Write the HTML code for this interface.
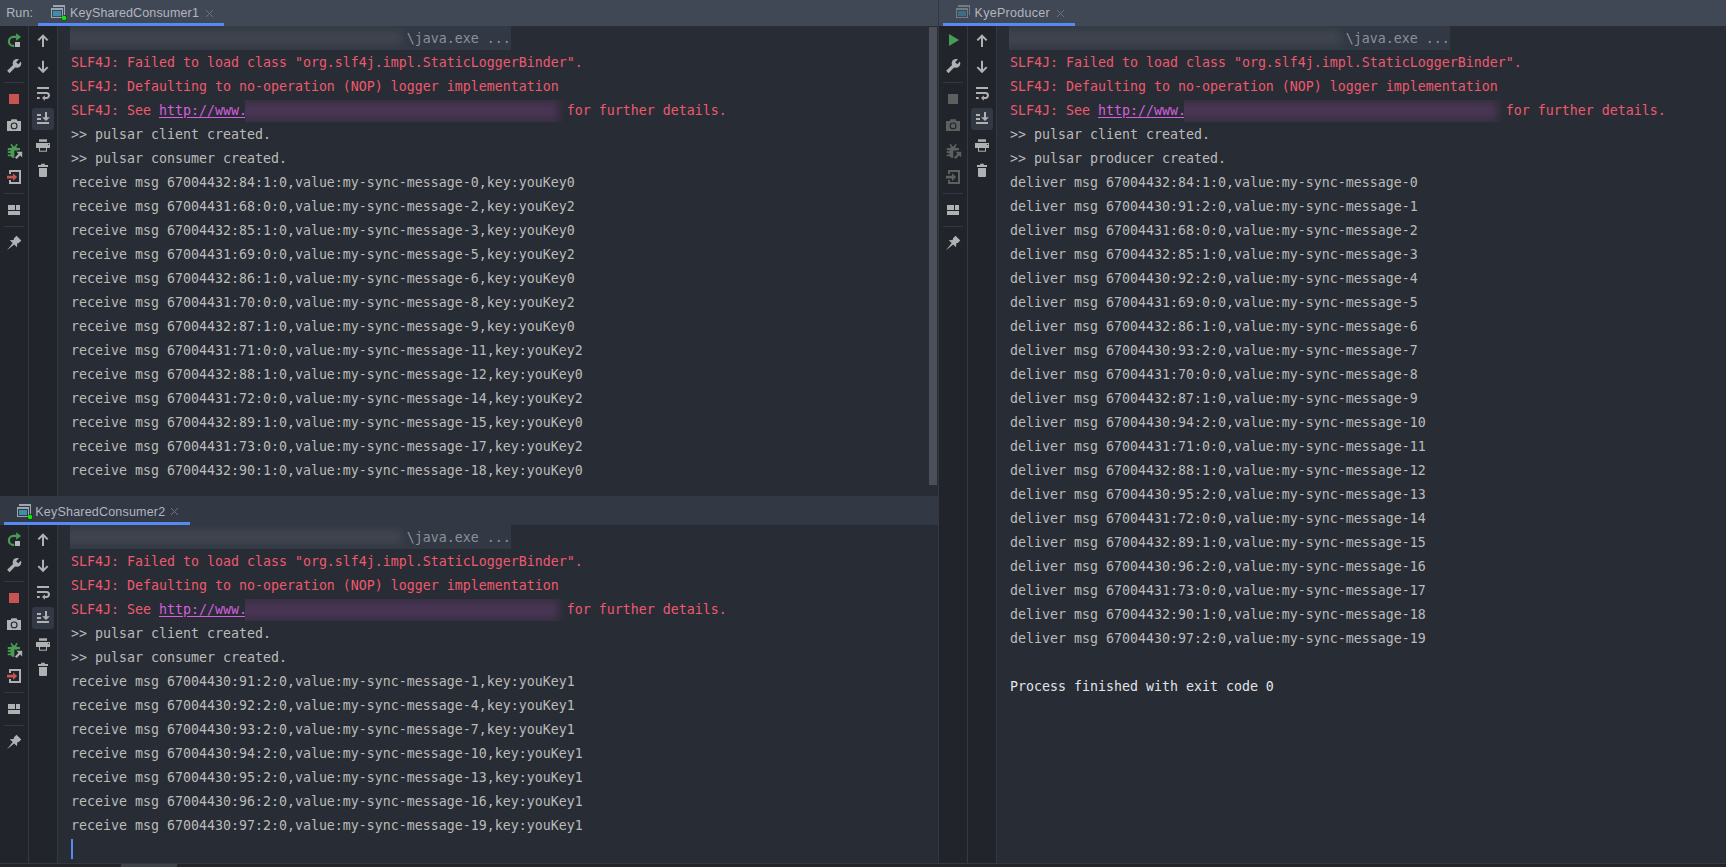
<!DOCTYPE html>
<html lang="en"><head><meta charset="utf-8"><title>Run</title>
<style>
html,body{margin:0;padding:0;background:#282c34;}
body{width:1726px;height:867px;overflow:hidden;position:relative;font-family:"Liberation Sans",sans-serif;}
.abs{position:absolute;}
.hdr{position:absolute;background:#414855;}
.hdr2{position:absolute;background:#323844;}
.side{position:absolute;background:#21252b;}
.vb{position:absolute;width:1px;background:#333841;}
.hb{position:absolute;height:1px;background:#333841;}
.blue{position:absolute;height:3px;background:#568af2;}
.tabt{position:absolute;font-size:12.5px;line-height:16px;color:#b2b6c0;white-space:pre;}
.x{position:absolute;width:9px;height:9px;}
.con{position:absolute;font-family:"DejaVu Sans Mono","Liberation Mono",monospace;font-size:13.29px;line-height:24px;color:#bbbbbb;}
.ln{height:24px;position:relative;white-space:pre;}
.err{color:#ef596f;}
.sys{color:#e2e4e8;}
.lnk{color:#d55fde;text-decoration:underline;text-underline-offset:2px;}
.fold{color:#8b919b;}
.hl{position:absolute;left:-1px;top:-1px;width:441px;height:24px;overflow:hidden;background:#333944;}
.rel{position:relative;}
.blur{position:absolute;display:block;filter:blur(4px);}
.b1{left:-10px;top:5px;width:342px;height:14px;background:#40454f;}
.bx{position:absolute;left:174px;top:1px;width:321px;height:22px;overflow:hidden;background:linear-gradient(90deg,#382f42 0,#382f42 308px,rgba(56,47,66,0) 321px);}
.b2{left:-10px;top:5px;width:322px;height:12px;background:#4c3758;}
.caret{position:absolute;left:0px;top:1px;width:2px;height:20px;background:#568af2;}
.ib{position:absolute;width:16px;height:16px;}
.ic{width:16px;height:16px;display:block;overflow:visible;}
.sep{position:absolute;width:20px;height:1px;background:#333841;}
.sel{position:absolute;width:22px;height:22px;border-radius:3px;background:#323844;}
.thumb{position:absolute;background:#4b4f59;}
</style></head>
<body>
<div class="hdr" style="left:0;top:0;width:938px;height:26px"></div>
<div class="hdr" style="left:939px;top:0;width:787px;height:26px"></div>
<div class="vb" style="left:938px;top:0;height:867px"></div>
<div class="tabt" style="left:6.2px;top:5px;letter-spacing:0.15px">Run:</div>
<div class="ib" style="left:50px;top:4px"><svg class="ic" viewBox="0 0 16 16"><path d="M3 1 H15 V11 H14 V3 H3 Z" fill="#9aa7b0"/><path d="M1 4 H13 V14 H1 Z M2 6 V13 H12 V6 Z" fill="#9aa7b0" fill-rule="evenodd"/><rect x="3" y="7" width="8" height="5" fill="#3f8cab"/><circle cx="14.1" cy="14" r="2.9" fill="rgba(20,22,30,0.35)"/><circle cx="14.1" cy="14" r="2.2" fill="#00f000"/></svg></div>
<div class="tabt" style="left:70px;top:5px;letter-spacing:0.14px">KeySharedConsumer1</div>
<svg class="x" style="left:204.5px;top:8.5px" viewBox="0 0 9 9"><path d="M1 1 L8 8 M8 1 L1 8" stroke="#6b717d" stroke-width="1" fill="none"/></svg>
<div class="blue" style="left:38px;top:23px;width:186px"></div>
<div class="ib" style="left:955px;top:4px;opacity:0.55"><svg class="ic" viewBox="0 0 16 16"><path d="M3 1 H15 V11 H14 V3 H3 Z" fill="#9aa7b0"/><path d="M1 4 H13 V14 H1 Z M2 6 V13 H12 V6 Z" fill="#9aa7b0" fill-rule="evenodd"/><rect x="3" y="7" width="8" height="5" fill="#3f8cab"/></svg></div>
<div class="tabt" style="left:974.6px;top:5px;letter-spacing:0.27px">KyeProducer</div>
<svg class="x" style="left:1055.5px;top:8.7px" viewBox="0 0 9 9"><path d="M1 1 L8 8 M8 1 L1 8" stroke="#6b717d" stroke-width="1" fill="none"/></svg>
<div class="blue" style="left:943px;top:23px;width:132px"></div>
<div class="side" style="left:0;top:26px;width:57px;height:837px"></div>
<div class="vb" style="left:28px;top:26px;height:837px"></div>
<div class="vb" style="left:57px;top:26px;height:837px"></div>
<div class="side" style="left:939px;top:26px;width:57px;height:837px"></div>
<div class="vb" style="left:967px;top:26px;height:837px"></div>
<div class="vb" style="left:996px;top:26px;height:837px"></div>
<div class="hdr2" style="left:0;top:496px;width:938px;height:29px"></div>
<div class="ib" style="left:16px;top:503px"><svg class="ic" viewBox="0 0 16 16"><path d="M3 1 H15 V11 H14 V3 H3 Z" fill="#9aa7b0"/><path d="M1 4 H13 V14 H1 Z M2 6 V13 H12 V6 Z" fill="#9aa7b0" fill-rule="evenodd"/><rect x="3" y="7" width="8" height="5" fill="#3f8cab"/><circle cx="14.1" cy="14" r="2.9" fill="rgba(20,22,30,0.35)"/><circle cx="14.1" cy="14" r="2.2" fill="#00f000"/></svg></div>
<div class="tabt" style="left:35.3px;top:504px;letter-spacing:0.2px">KeySharedConsumer2</div>
<svg class="x" style="left:170.4px;top:507.4px" viewBox="0 0 9 9"><path d="M1 1 L8 8 M8 1 L1 8" stroke="#6b717d" stroke-width="1" fill="none"/></svg>
<div class="blue" style="left:4px;top:522px;width:186px"></div>
<div class="side" style="left:0;top:864px;width:1726px;height:3px"></div>
<div class="hb" style="left:0;top:863px;width:1726px"></div>
<div class="thumb" style="left:121px;top:864px;width:56px;height:3px;background:#3e424c"></div>
<div class="thumb" style="left:929px;top:27px;width:8px;height:458px"></div>
<div class="ib" style="left:6px;top:33px"><svg class="ic" viewBox="0 0 16 16"><path d="M10.3 3.9 H7.4 A4.5 4.5 0 0 0 7.4 12.9 H8.2" fill="none" stroke="#499c54" stroke-width="2.2"/><path d="M10.1 0.2 L15.1 3.9 L10.1 7.7 Z" fill="#499c54"/><rect x="9" y="9" width="5" height="5" fill="#b4b6b8"/></svg></div>
<div class="ib" style="left:6px;top:59px"><svg class="ic" viewBox="0 0 16 16"><path d="M2.3 13 L10 5.3" stroke="#afb1b3" stroke-width="3.2" fill="none"/><circle cx="11" cy="4.4" r="4.3" fill="#afb1b3"/><path d="M11.2 4.2 L16.5 -1.1" stroke="#21252b" stroke-width="3" fill="none"/></svg></div>
<div class="sep" style="left:4px;top:82px"></div>
<div class="ib" style="left:6px;top:91px"><svg class="ic" viewBox="0 0 16 16"><rect x="3" y="3" width="10" height="10" fill="#c75450"/></svg></div>
<div class="ib" style="left:6px;top:118px"><svg class="ic" viewBox="0 0 16 16"><path d="M1 3 H4.6 L5.6 1.2 H10.6 L11.6 3 H15 V13 H1 Z" fill="#afb1b3"/><circle cx="8.1" cy="7.9" r="2.9" fill="none" stroke="#21252b" stroke-width="1.1"/></svg></div>
<div class="ib" style="left:6px;top:144px"><svg class="ic" viewBox="0 0 16 16"><defs><clipPath id="bc499c54"><path d="M0 -1 H16 V6.4 H8.3 V16 H0 Z"/></clipPath></defs><g clip-path="url(#bc499c54)"><rect x="4.6" y="2.4" width="7" height="11.5" rx="3.5" fill="#499c54"/><path d="M7.2 3.2 L5 0.2 M9 3.2 L11.2 0.2" stroke="#499c54" stroke-width="1.5" fill="none"/><path d="M1.8 5.1 H14" stroke="#499c54" stroke-width="2.4" fill="none"/><path d="M1.8 8.2 H6 M1.8 11.4 H6" stroke="#499c54" stroke-width="1.7" fill="none"/></g><path d="M10.4 7.8 H16.2 V13.6 Z" fill="#afb1b3"/><path d="M14.6 9.4 L9.8 14.2" stroke="#afb1b3" stroke-width="2.3" fill="none"/></svg></div>
<div class="ib" style="left:6px;top:170px"><svg class="ic" viewBox="0 0 16 16"><path d="M3 4 V0 H15 V14 H3 V10 H5 V12 H13 V2 H5 V4 Z" fill="#afb1b3"/><path d="M1 5.8 H7 V3.2 L11.1 7.1 L7 11 V8.4 H1 Z" fill="#c75450"/></svg></div>
<div class="sep" style="left:4px;top:193px"></div>
<div class="ib" style="left:6px;top:202px"><svg class="ic" viewBox="0 0 16 16"><rect x="2" y="3" width="7" height="5" fill="#afb1b3"/><rect x="10" y="3" width="4" height="5" fill="#afb1b3"/><rect x="2" y="9" width="12" height="4" fill="#afb1b3"/></svg></div>
<div class="sep" style="left:4px;top:226px"></div>
<div class="ib" style="left:6px;top:235px"><svg class="ic" viewBox="0 0 16 16"><path d="M10.5 0.8 L15.3 5.6 L12.8 8.1 L11.3 8.3 L11 12.3 L8.2 9.5 L1 15.2 L6.7 8 L3.7 5.3 L7.7 5 L8 3.3 Z" fill="#afb1b3"/></svg></div>
<div class="ib" style="left:35px;top:33px"><svg class="ic" viewBox="0 0 16 16"><path d="M8 13.9 V3 M3.3 7.4 L8 2.7 L12.7 7.4" fill="none" stroke="#afb1b3" stroke-width="2"/></svg></div>
<div class="ib" style="left:35px;top:59px"><svg class="ic" viewBox="0 0 16 16"><path d="M8 1.8 V12.6 M3.3 8.1 L8 12.8 L12.7 8.1" fill="none" stroke="#afb1b3" stroke-width="2"/></svg></div>
<div class="ib" style="left:35px;top:85px"><svg class="ic" viewBox="0 0 16 16"><path d="M2 3 H14 M2 8 H11.5 A2.5 2.5 0 0 1 11.5 13 H9.5 M2 13 H4.7" fill="none" stroke="#afb1b3" stroke-width="2"/><path d="M9.9 10.2 L7 13 L9.9 15.8 Z" fill="#afb1b3"/></svg></div>
<div class="sel" style="left:32px;top:108px"></div>
<div class="ib" style="left:35px;top:111px"><svg class="ic" viewBox="0 0 16 16"><path d="M2 4 H6 M2 8 H6 M2 12 H14 M11 1 V7" fill="none" stroke="#afb1b3" stroke-width="2"/><path d="M7.1 6.2 H14.9 L11 9.9 Z" fill="#afb1b3"/></svg></div>
<div class="ib" style="left:35px;top:137px"><svg class="ic" viewBox="0 0 16 16"><rect x="4" y="2.3" width="8" height="2.5" fill="#afb1b3"/><rect x="1" y="6" width="14" height="5" fill="#afb1b3"/><rect x="4.5" y="10.5" width="7" height="3.7" fill="#21252b" stroke="#afb1b3" stroke-width="1"/><circle cx="13.5" cy="7.5" r="0.6" fill="#21252b"/></svg></div>
<div class="ib" style="left:35px;top:163px"><svg class="ic" viewBox="0 0 16 16"><path d="M6.2 0.8 H9.8 V2 H13 V4 H3 V2 H6.2 Z" fill="#afb1b3"/><path d="M4 5 H12 V13 A1 1 0 0 1 11 14 H5 A1 1 0 0 1 4 13 Z" fill="#afb1b3"/></svg></div>
<div class="ib" style="left:6px;top:532px"><svg class="ic" viewBox="0 0 16 16"><path d="M10.3 3.9 H7.4 A4.5 4.5 0 0 0 7.4 12.9 H8.2" fill="none" stroke="#499c54" stroke-width="2.2"/><path d="M10.1 0.2 L15.1 3.9 L10.1 7.7 Z" fill="#499c54"/><rect x="9" y="9" width="5" height="5" fill="#b4b6b8"/></svg></div>
<div class="ib" style="left:6px;top:558px"><svg class="ic" viewBox="0 0 16 16"><path d="M2.3 13 L10 5.3" stroke="#afb1b3" stroke-width="3.2" fill="none"/><circle cx="11" cy="4.4" r="4.3" fill="#afb1b3"/><path d="M11.2 4.2 L16.5 -1.1" stroke="#21252b" stroke-width="3" fill="none"/></svg></div>
<div class="sep" style="left:4px;top:581px"></div>
<div class="ib" style="left:6px;top:590px"><svg class="ic" viewBox="0 0 16 16"><rect x="3" y="3" width="10" height="10" fill="#c75450"/></svg></div>
<div class="ib" style="left:6px;top:617px"><svg class="ic" viewBox="0 0 16 16"><path d="M1 3 H4.6 L5.6 1.2 H10.6 L11.6 3 H15 V13 H1 Z" fill="#afb1b3"/><circle cx="8.1" cy="7.9" r="2.9" fill="none" stroke="#21252b" stroke-width="1.1"/></svg></div>
<div class="ib" style="left:6px;top:643px"><svg class="ic" viewBox="0 0 16 16"><defs><clipPath id="bc499c54"><path d="M0 -1 H16 V6.4 H8.3 V16 H0 Z"/></clipPath></defs><g clip-path="url(#bc499c54)"><rect x="4.6" y="2.4" width="7" height="11.5" rx="3.5" fill="#499c54"/><path d="M7.2 3.2 L5 0.2 M9 3.2 L11.2 0.2" stroke="#499c54" stroke-width="1.5" fill="none"/><path d="M1.8 5.1 H14" stroke="#499c54" stroke-width="2.4" fill="none"/><path d="M1.8 8.2 H6 M1.8 11.4 H6" stroke="#499c54" stroke-width="1.7" fill="none"/></g><path d="M10.4 7.8 H16.2 V13.6 Z" fill="#afb1b3"/><path d="M14.6 9.4 L9.8 14.2" stroke="#afb1b3" stroke-width="2.3" fill="none"/></svg></div>
<div class="ib" style="left:6px;top:669px"><svg class="ic" viewBox="0 0 16 16"><path d="M3 4 V0 H15 V14 H3 V10 H5 V12 H13 V2 H5 V4 Z" fill="#afb1b3"/><path d="M1 5.8 H7 V3.2 L11.1 7.1 L7 11 V8.4 H1 Z" fill="#c75450"/></svg></div>
<div class="sep" style="left:4px;top:692px"></div>
<div class="ib" style="left:6px;top:701px"><svg class="ic" viewBox="0 0 16 16"><rect x="2" y="3" width="7" height="5" fill="#afb1b3"/><rect x="10" y="3" width="4" height="5" fill="#afb1b3"/><rect x="2" y="9" width="12" height="4" fill="#afb1b3"/></svg></div>
<div class="sep" style="left:4px;top:725px"></div>
<div class="ib" style="left:6px;top:734px"><svg class="ic" viewBox="0 0 16 16"><path d="M10.5 0.8 L15.3 5.6 L12.8 8.1 L11.3 8.3 L11 12.3 L8.2 9.5 L1 15.2 L6.7 8 L3.7 5.3 L7.7 5 L8 3.3 Z" fill="#afb1b3"/></svg></div>
<div class="ib" style="left:35px;top:532px"><svg class="ic" viewBox="0 0 16 16"><path d="M8 13.9 V3 M3.3 7.4 L8 2.7 L12.7 7.4" fill="none" stroke="#afb1b3" stroke-width="2"/></svg></div>
<div class="ib" style="left:35px;top:558px"><svg class="ic" viewBox="0 0 16 16"><path d="M8 1.8 V12.6 M3.3 8.1 L8 12.8 L12.7 8.1" fill="none" stroke="#afb1b3" stroke-width="2"/></svg></div>
<div class="ib" style="left:35px;top:584px"><svg class="ic" viewBox="0 0 16 16"><path d="M2 3 H14 M2 8 H11.5 A2.5 2.5 0 0 1 11.5 13 H9.5 M2 13 H4.7" fill="none" stroke="#afb1b3" stroke-width="2"/><path d="M9.9 10.2 L7 13 L9.9 15.8 Z" fill="#afb1b3"/></svg></div>
<div class="sel" style="left:32px;top:607px"></div>
<div class="ib" style="left:35px;top:610px"><svg class="ic" viewBox="0 0 16 16"><path d="M2 4 H6 M2 8 H6 M2 12 H14 M11 1 V7" fill="none" stroke="#afb1b3" stroke-width="2"/><path d="M7.1 6.2 H14.9 L11 9.9 Z" fill="#afb1b3"/></svg></div>
<div class="ib" style="left:35px;top:636px"><svg class="ic" viewBox="0 0 16 16"><rect x="4" y="2.3" width="8" height="2.5" fill="#afb1b3"/><rect x="1" y="6" width="14" height="5" fill="#afb1b3"/><rect x="4.5" y="10.5" width="7" height="3.7" fill="#21252b" stroke="#afb1b3" stroke-width="1"/><circle cx="13.5" cy="7.5" r="0.6" fill="#21252b"/></svg></div>
<div class="ib" style="left:35px;top:662px"><svg class="ic" viewBox="0 0 16 16"><path d="M6.2 0.8 H9.8 V2 H13 V4 H3 V2 H6.2 Z" fill="#afb1b3"/><path d="M4 5 H12 V13 A1 1 0 0 1 11 14 H5 A1 1 0 0 1 4 13 Z" fill="#afb1b3"/></svg></div>
<div class="ib" style="left:945px;top:33px"><svg class="ic" viewBox="0 0 16 16"><path d="M4 1 L14 7 L4 13 Z" fill="#499c54"/></svg></div>
<div class="ib" style="left:945px;top:59px"><svg class="ic" viewBox="0 0 16 16"><path d="M2.3 13 L10 5.3" stroke="#afb1b3" stroke-width="3.2" fill="none"/><circle cx="11" cy="4.4" r="4.3" fill="#afb1b3"/><path d="M11.2 4.2 L16.5 -1.1" stroke="#21252b" stroke-width="3" fill="none"/></svg></div>
<div class="sep" style="left:943px;top:82px"></div>
<div class="ib" style="left:945px;top:91px"><svg class="ic" viewBox="0 0 16 16"><rect x="3" y="3" width="10" height="10" fill="#5e6060"/></svg></div>
<div class="ib" style="left:945px;top:118px"><svg class="ic" viewBox="0 0 16 16"><path d="M1 3 H4.6 L5.6 1.2 H10.6 L11.6 3 H15 V13 H1 Z" fill="#5e6060"/><circle cx="8.1" cy="7.9" r="2.9" fill="none" stroke="#21252b" stroke-width="1.1"/></svg></div>
<div class="ib" style="left:945px;top:144px"><svg class="ic" viewBox="0 0 16 16"><defs><clipPath id="bc5e6060"><path d="M0 -1 H16 V6.4 H8.3 V16 H0 Z"/></clipPath></defs><g clip-path="url(#bc5e6060)"><rect x="4.6" y="2.4" width="7" height="11.5" rx="3.5" fill="#5e6060"/><path d="M7.2 3.2 L5 0.2 M9 3.2 L11.2 0.2" stroke="#5e6060" stroke-width="1.5" fill="none"/><path d="M1.8 5.1 H14" stroke="#5e6060" stroke-width="2.4" fill="none"/><path d="M1.8 8.2 H6 M1.8 11.4 H6" stroke="#5e6060" stroke-width="1.7" fill="none"/></g><path d="M10.4 7.8 H16.2 V13.6 Z" fill="#5e6060"/><path d="M14.6 9.4 L9.8 14.2" stroke="#5e6060" stroke-width="2.3" fill="none"/></svg></div>
<div class="ib" style="left:945px;top:170px"><svg class="ic" viewBox="0 0 16 16"><path d="M3 4 V0 H15 V14 H3 V10 H5 V12 H13 V2 H5 V4 Z" fill="#5e6060"/><path d="M1 5.8 H7 V3.2 L11.1 7.1 L7 11 V8.4 H1 Z" fill="#5e6060"/></svg></div>
<div class="sep" style="left:943px;top:193px"></div>
<div class="ib" style="left:945px;top:202px"><svg class="ic" viewBox="0 0 16 16"><rect x="2" y="3" width="7" height="5" fill="#afb1b3"/><rect x="10" y="3" width="4" height="5" fill="#afb1b3"/><rect x="2" y="9" width="12" height="4" fill="#afb1b3"/></svg></div>
<div class="sep" style="left:943px;top:226px"></div>
<div class="ib" style="left:945px;top:235px"><svg class="ic" viewBox="0 0 16 16"><path d="M10.5 0.8 L15.3 5.6 L12.8 8.1 L11.3 8.3 L11 12.3 L8.2 9.5 L1 15.2 L6.7 8 L3.7 5.3 L7.7 5 L8 3.3 Z" fill="#afb1b3"/></svg></div>
<div class="ib" style="left:974px;top:33px"><svg class="ic" viewBox="0 0 16 16"><path d="M8 13.9 V3 M3.3 7.4 L8 2.7 L12.7 7.4" fill="none" stroke="#afb1b3" stroke-width="2"/></svg></div>
<div class="ib" style="left:974px;top:59px"><svg class="ic" viewBox="0 0 16 16"><path d="M8 1.8 V12.6 M3.3 8.1 L8 12.8 L12.7 8.1" fill="none" stroke="#afb1b3" stroke-width="2"/></svg></div>
<div class="ib" style="left:974px;top:85px"><svg class="ic" viewBox="0 0 16 16"><path d="M2 3 H14 M2 8 H11.5 A2.5 2.5 0 0 1 11.5 13 H9.5 M2 13 H4.7" fill="none" stroke="#afb1b3" stroke-width="2"/><path d="M9.9 10.2 L7 13 L9.9 15.8 Z" fill="#afb1b3"/></svg></div>
<div class="sel" style="left:971px;top:108px"></div>
<div class="ib" style="left:974px;top:111px"><svg class="ic" viewBox="0 0 16 16"><path d="M2 4 H6 M2 8 H6 M2 12 H14 M11 1 V7" fill="none" stroke="#afb1b3" stroke-width="2"/><path d="M7.1 6.2 H14.9 L11 9.9 Z" fill="#afb1b3"/></svg></div>
<div class="ib" style="left:974px;top:137px"><svg class="ic" viewBox="0 0 16 16"><rect x="4" y="2.3" width="8" height="2.5" fill="#afb1b3"/><rect x="1" y="6" width="14" height="5" fill="#afb1b3"/><rect x="4.5" y="10.5" width="7" height="3.7" fill="#21252b" stroke="#afb1b3" stroke-width="1"/><circle cx="13.5" cy="7.5" r="0.6" fill="#21252b"/></svg></div>
<div class="ib" style="left:974px;top:163px"><svg class="ic" viewBox="0 0 16 16"><path d="M6.2 0.8 H9.8 V2 H13 V4 H3 V2 H6.2 Z" fill="#afb1b3"/><path d="M4 5 H12 V13 A1 1 0 0 1 11 14 H5 A1 1 0 0 1 4 13 Z" fill="#afb1b3"/></svg></div>
<div class="con" style="left:71px;top:27px"><div class="ln java"><span class="hl"><span class="blur b1"></span></span><span class="rel">                                          </span><span class="fold rel">\java.exe ...</span></div>
<div class="ln err">SLF4J: Failed to load class "org.slf4j.impl.StaticLoggerBinder".</div>
<div class="ln err">SLF4J: Defaulting to no-operation (NOP) logger implementation</div>
<div class="ln err">SLF4J: See <span class="lnk">http://www.</span><span class="bx"><span class="blur b2"></span></span><span>                                       </span> for further details.</div>
<div class="ln">&gt;&gt; pulsar client created.</div>
<div class="ln">&gt;&gt; pulsar consumer created.</div>
<div class="ln">receive msg 67004432:84:1:0,value:my-sync-message-0,key:youKey0</div>
<div class="ln">receive msg 67004431:68:0:0,value:my-sync-message-2,key:youKey2</div>
<div class="ln">receive msg 67004432:85:1:0,value:my-sync-message-3,key:youKey0</div>
<div class="ln">receive msg 67004431:69:0:0,value:my-sync-message-5,key:youKey2</div>
<div class="ln">receive msg 67004432:86:1:0,value:my-sync-message-6,key:youKey0</div>
<div class="ln">receive msg 67004431:70:0:0,value:my-sync-message-8,key:youKey2</div>
<div class="ln">receive msg 67004432:87:1:0,value:my-sync-message-9,key:youKey0</div>
<div class="ln">receive msg 67004431:71:0:0,value:my-sync-message-11,key:youKey2</div>
<div class="ln">receive msg 67004432:88:1:0,value:my-sync-message-12,key:youKey0</div>
<div class="ln">receive msg 67004431:72:0:0,value:my-sync-message-14,key:youKey2</div>
<div class="ln">receive msg 67004432:89:1:0,value:my-sync-message-15,key:youKey0</div>
<div class="ln">receive msg 67004431:73:0:0,value:my-sync-message-17,key:youKey2</div>
<div class="ln">receive msg 67004432:90:1:0,value:my-sync-message-18,key:youKey0</div></div>
<div class="con" style="left:71px;top:526px"><div class="ln java"><span class="hl"><span class="blur b1"></span></span><span class="rel">                                          </span><span class="fold rel">\java.exe ...</span></div>
<div class="ln err">SLF4J: Failed to load class "org.slf4j.impl.StaticLoggerBinder".</div>
<div class="ln err">SLF4J: Defaulting to no-operation (NOP) logger implementation</div>
<div class="ln err">SLF4J: See <span class="lnk">http://www.</span><span class="bx"><span class="blur b2"></span></span><span>                                       </span> for further details.</div>
<div class="ln">&gt;&gt; pulsar client created.</div>
<div class="ln">&gt;&gt; pulsar consumer created.</div>
<div class="ln">receive msg 67004430:91:2:0,value:my-sync-message-1,key:youKey1</div>
<div class="ln">receive msg 67004430:92:2:0,value:my-sync-message-4,key:youKey1</div>
<div class="ln">receive msg 67004430:93:2:0,value:my-sync-message-7,key:youKey1</div>
<div class="ln">receive msg 67004430:94:2:0,value:my-sync-message-10,key:youKey1</div>
<div class="ln">receive msg 67004430:95:2:0,value:my-sync-message-13,key:youKey1</div>
<div class="ln">receive msg 67004430:96:2:0,value:my-sync-message-16,key:youKey1</div>
<div class="ln">receive msg 67004430:97:2:0,value:my-sync-message-19,key:youKey1</div>
<div class="ln"><span class="caret"></span></div></div>
<div class="con" style="left:1010px;top:27px"><div class="ln java"><span class="hl"><span class="blur b1"></span></span><span class="rel">                                          </span><span class="fold rel">\java.exe ...</span></div>
<div class="ln err">SLF4J: Failed to load class "org.slf4j.impl.StaticLoggerBinder".</div>
<div class="ln err">SLF4J: Defaulting to no-operation (NOP) logger implementation</div>
<div class="ln err">SLF4J: See <span class="lnk">http://www.</span><span class="bx"><span class="blur b2"></span></span><span>                                       </span> for further details.</div>
<div class="ln">&gt;&gt; pulsar client created.</div>
<div class="ln">&gt;&gt; pulsar producer created.</div>
<div class="ln">deliver msg 67004432:84:1:0,value:my-sync-message-0</div>
<div class="ln">deliver msg 67004430:91:2:0,value:my-sync-message-1</div>
<div class="ln">deliver msg 67004431:68:0:0,value:my-sync-message-2</div>
<div class="ln">deliver msg 67004432:85:1:0,value:my-sync-message-3</div>
<div class="ln">deliver msg 67004430:92:2:0,value:my-sync-message-4</div>
<div class="ln">deliver msg 67004431:69:0:0,value:my-sync-message-5</div>
<div class="ln">deliver msg 67004432:86:1:0,value:my-sync-message-6</div>
<div class="ln">deliver msg 67004430:93:2:0,value:my-sync-message-7</div>
<div class="ln">deliver msg 67004431:70:0:0,value:my-sync-message-8</div>
<div class="ln">deliver msg 67004432:87:1:0,value:my-sync-message-9</div>
<div class="ln">deliver msg 67004430:94:2:0,value:my-sync-message-10</div>
<div class="ln">deliver msg 67004431:71:0:0,value:my-sync-message-11</div>
<div class="ln">deliver msg 67004432:88:1:0,value:my-sync-message-12</div>
<div class="ln">deliver msg 67004430:95:2:0,value:my-sync-message-13</div>
<div class="ln">deliver msg 67004431:72:0:0,value:my-sync-message-14</div>
<div class="ln">deliver msg 67004432:89:1:0,value:my-sync-message-15</div>
<div class="ln">deliver msg 67004430:96:2:0,value:my-sync-message-16</div>
<div class="ln">deliver msg 67004431:73:0:0,value:my-sync-message-17</div>
<div class="ln">deliver msg 67004432:90:1:0,value:my-sync-message-18</div>
<div class="ln">deliver msg 67004430:97:2:0,value:my-sync-message-19</div>
<div class="ln">&nbsp;</div>
<div class="ln sys">Process finished with exit code 0</div></div>
</body></html>
